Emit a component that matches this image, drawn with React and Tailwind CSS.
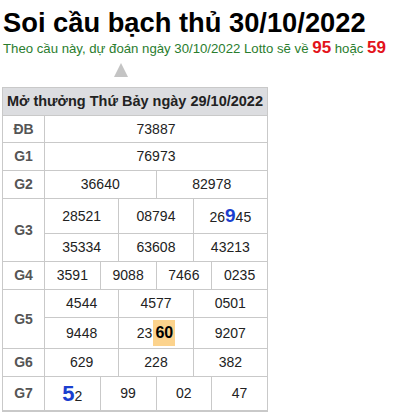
import React from "react";

const F = { fontFamily: '"Liberation Sans", Arial, sans-serif' };

function Cell({ span, children, className = "" }) {
  return (
    <div
      className={`flex items-center justify-center border-r border-b border-[#c9c9c9] text-[14px] text-[#222] ${span} ${className}`}
    >
      {children}
    </div>
  );
}

function Label({ children, className = "" }) {
  return (
    <div
      className={`flex items-center justify-center border-r border-b border-[#c9c9c9] text-[14px] font-bold text-[#555] ${className}`}
    >
      {children}
    </div>
  );
}

export default function App() {
  return (
    <div className="bg-white w-[393px] h-[416px] overflow-hidden" style={F}>
      <div className="pl-[3px] pt-[7px] text-[27.3px] leading-[32px] font-bold text-black whitespace-nowrap">
        Soi cầu bạch thủ 30/10/2022
      </div>
      <div className="pl-[3px] text-[13.2px] leading-[20px] text-[#2a7d2e] whitespace-nowrap">
        Theo cầu này, dự đoán ngày 30/10/2022 Lotto sẽ về{" "}
        <span className="text-[17px] leading-none font-bold text-[#e3131b]">95</span> hoặc{" "}
        <span className="text-[17px] leading-none font-bold text-[#e3131b]">59</span>
      </div>
      <div className="ml-[114px] mt-[4px] w-0 h-0 border-l-[7.5px] border-r-[7.5px] border-b-[14px] border-l-transparent border-r-transparent border-b-[#c4c4c4]" />
      <div className="mt-[10px] ml-[2px] w-[266px] grid grid-cols-[42px_repeat(12,minmax(0,1fr))] grid-rows-[28px_27px_28px_28px_35px_28px_28px_28px_31px_28px_34px] border-l border-t border-b border-[#c9c9c9]">
        <div className="col-span-13 flex items-center justify-center border-r border-b border-[#c9c9c9] bg-[#dcdde0] text-[14.5px] font-bold text-[#222] whitespace-nowrap">
          Mở thưởng Thứ Bảy ngày 29/10/2022
        </div>

        <Label>ĐB</Label>
        <Cell span="col-span-12">73887</Cell>

        <Label>G1</Label>
        <Cell span="col-span-12">76973</Cell>

        <Label>G2</Label>
        <Cell span="col-span-6">36640</Cell>
        <Cell span="col-span-6">82978</Cell>

        <Label className="row-span-2">G3</Label>
        <Cell span="col-span-4">28521</Cell>
        <Cell span="col-span-4">08794</Cell>
        <Cell span="col-span-4">
          <span className="flex items-baseline">
            26<span className="text-[19px] font-bold text-[#1b3fcf]">9</span>45
          </span>
        </Cell>
        <Cell span="col-span-4">35334</Cell>
        <Cell span="col-span-4">63608</Cell>
        <Cell span="col-span-4">43213</Cell>

        <Label>G4</Label>
        <Cell span="col-span-3">3591</Cell>
        <Cell span="col-span-3">9088</Cell>
        <Cell span="col-span-3">7466</Cell>
        <Cell span="col-span-3">0235</Cell>

        <Label className="row-span-2">G5</Label>
        <Cell span="col-span-4">4544</Cell>
        <Cell span="col-span-4">4577</Cell>
        <Cell span="col-span-4">0501</Cell>
        <Cell span="col-span-4">9448</Cell>
        <Cell span="col-span-4">
          <span className="flex items-baseline">
            23
            <span className="ml-[1px] px-[2px] py-[1px] bg-[#fcd38d] text-[16px] font-bold text-black">60</span>
          </span>
        </Cell>
        <Cell span="col-span-4">9207</Cell>

        <Label>G6</Label>
        <Cell span="col-span-4">629</Cell>
        <Cell span="col-span-4">228</Cell>
        <Cell span="col-span-4">382</Cell>

        <Label>G7</Label>
        <Cell span="col-span-3">
          <span className="flex items-baseline">
            <span className="text-[22px] font-bold text-[#1b3fcf]">5</span>2
          </span>
        </Cell>
        <Cell span="col-span-3">99</Cell>
        <Cell span="col-span-3">02</Cell>
        <Cell span="col-span-3">47</Cell>
      </div>
    </div>
  );
}
